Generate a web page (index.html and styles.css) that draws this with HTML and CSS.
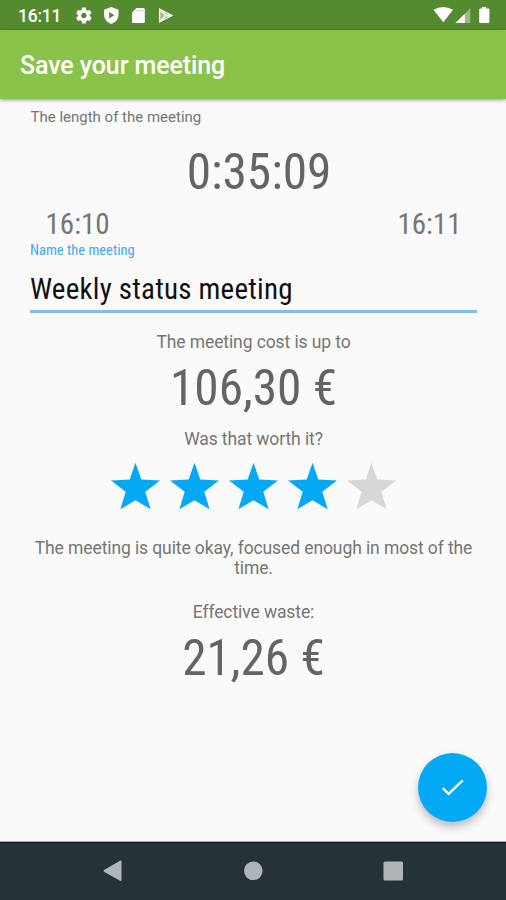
FILE: index.html
```html
<!DOCTYPE html>
<html lang="en">
<head>
<meta charset="utf-8">
<title>Save your meeting</title>
<link rel="stylesheet" href="styles.css">
</head>
<body>
<div class="screen">
  <div class="statusbar">
    <span class="clock">16:11</span>
    <svg class="status-left" width="100" height="30" viewBox="75 0 100 30" fill="#fff">
      <path transform="translate(74.4 6) scale(.79)" d="M19.43 12.98c.04-.32.07-.64.07-.98s-.03-.66-.07-.98l2.11-1.65c.19-.15.24-.42.12-.64l-2-3.46c-.12-.22-.39-.3-.61-.22l-2.49 1c-.52-.4-1.08-.73-1.69-.98l-.38-2.65C14.46 2.18 14.25 2 14 2h-4c-.25 0-.46.18-.49.42l-.38 2.65c-.61.25-1.17.59-1.69.98l-2.49-1c-.23-.09-.49 0-.61.22l-2 3.46c-.13.22-.07.49.12.64l2.11 1.65c-.04.32-.07.65-.07.98s.03.66.07.98l-2.11 1.65c-.19.15-.24.42-.12.64l2 3.460c.12.22.39.3.61.22l2.49-1c.52.4 1.08.73 1.69.98l.38 2.65c.03.24.24.42.49.42h4c.25 0 .46-.18.49-.42l.38-2.65c.61-.25 1.17-.59 1.69-.98l2.49 1c.23.09.49 0 .61-.22l2-3.46c.12-.22.07-.49-.12-.64l-2.11-1.65zM12 15.500c-1.930 0-3.500-1.570-3.500-3.500s1.570-3.500 3.500-3.500 3.500 1.570 3.500 3.500-1.570 3.500-3.500 3.500z"/>
      <path fill-rule="evenodd" d="M111.300 7l7.200 2.700v5.300c0 4.300-3.200 7.500-7.200 9-4-1.500-7.200-4.700-7.200-9V9.700zM109.100 12v6.600l5.400-3.300z"/>
      <path d="M136.500 8h7q1.300 0 1.300 1.300v12.400q0 1.300-1.300 1.300h-10.200q-1.300 0-1.300-1.300V12.500z"/>
      <path d="M136.600 10h1v1.300h-1zM139.200 10h1v1.300h-1zM141.800 10h1v1.300h-1z" fill="#558b2f" opacity=".6"/>
      <path d="M159 8.200L173.200 15.500 159 22.800z" opacity=".45"/>
      <path d="M159 8.200L173.200 15.500 159 22.800zM160.200 11v9l4.700-4.500zM162.700 11.300l3.700 3.600 1.800-.9zM162.700 19.700l3.700-3.600 1.800.9z" fill-rule="evenodd"/>
    </svg>
    <svg class="status-right" width="60" height="30" viewBox="430 0 60 30" fill="#fff">
      <path d="M433.500 9.800Q443.300 4.200 453 9.800L443.300 22.200z"/>
      <path d="M470.300 8.200v14.800h-14.800z" opacity=".42"/>
      <path d="M464.800 13.700V23h-9.300z"/>
      <path d="M482.200 7h4v1.500h2.200q1 0 1 1V22q0 1-1 1h-8.200q-1 0-1-1V9.500q0-1 1-1h2z"/>
    </svg>
  </div>
  <header class="appbar"><h1>Save your meeting</h1></header>
  <main class="content">
    <p class="caption">The length of the meeting</p>
    <p class="figure duration">0:35:09</p>
    <div class="times"><span>16:10</span><span>16:11</span></div>
    <div class="field">
      <label class="label">Name the meeting</label>
      <div class="value">Weekly status meeting</div>
    </div>
    <p class="note cost-note">The meeting cost is up to</p>
    <p class="figure cost">106,30 €</p>
    <p class="note worth">Was that worth it?</p>
    <div class="stars">
      <svg viewBox="0 0 20 19"><path d="M10 0l2.360 6.880L20 7.240l-6 4.560L16.180 19 10 15.270 3.820 19 6 11.800 0 7.240l7.640-.36z"/></svg>
      <svg viewBox="0 0 20 19"><path d="M10 0l2.360 6.880L20 7.240l-6 4.560L16.180 19 10 15.270 3.820 19 6 11.800 0 7.240l7.640-.36z"/></svg>
      <svg viewBox="0 0 20 19"><path d="M10 0l2.360 6.880L20 7.240l-6 4.560L16.180 19 10 15.270 3.820 19 6 11.800 0 7.240l7.640-.36z"/></svg>
      <svg viewBox="0 0 20 19"><path d="M10 0l2.360 6.880L20 7.240l-6 4.560L16.180 19 10 15.270 3.820 19 6 11.800 0 7.240l7.640-.36z"/></svg>
      <svg class="off" viewBox="0 0 20 19"><path d="M10 0l2.360 6.880L20 7.240l-6 4.560L16.180 19 10 15.270 3.820 19 6 11.800 0 7.240l7.640-.36z"/></svg>
    </div>
    <p class="note verdict">The meeting is quite okay, focused enough in most of the time.</p>
    <p class="note waste-note">Effective waste:</p>
    <p class="figure waste">21,26 €</p>
  </main>
  <button class="fab" aria-label="Save">
    <svg width="24" height="20" viewBox="0 0 24 20" fill="none" stroke="#fff" stroke-width="2.400"><path d="M1.800 10.200l5.800 5.700L21.800 2.300"/></svg>
  </button>
  <nav class="navbar">
    <svg width="506" height="58" viewBox="0 842 506 58" fill="#b0b5b9">
      <path d="M120 860.800Q121.500 860 121.500 861.800V879.700Q121.500 881.500 120 880.700L104 871.700Q103 870.800 104 870z"/>
      <circle cx="253.300" cy="870.800" r="9.300"/>
      <rect x="383.500" y="861.500" width="19.500" height="19" rx="1.500"/>
    </svg>
  </nav>
</div>
</body>
</html>
```
FILE: styles.css
```css
* { box-sizing: border-box; }
body { margin: 0; font-family: Roboto, sans-serif; background: #fafafa; }
p, h1 { margin: 0; }
svg { display: block; }
.screen { position: relative; width: 506px; height: 900px; display: flex; flex-direction: column; overflow: hidden; }
.statusbar { height: 30px; flex: none; display: flex; background: #558b2f; color: #fff; }
.clock { width: 75px; padding-left: 18px; font-size: 17.5px; letter-spacing: -.25px; font-weight: 500; line-height: 32px; }
.status-right { margin-left: auto; margin-right: 16px; }
.appbar { height: 69px; flex: none; padding-left: 20px; background: #8bc34a; box-shadow: 0 1px 4px rgba(0,0,0,.4); position: relative; }
.appbar h1 { font-size: 25px; letter-spacing: -.1px; font-weight: 500; line-height: 72px; color: #fff; white-space: nowrap; }
.content { flex: 1; padding: 8px 29px 0 30px; color: #757575; }
.caption { font-size: 15px; line-height: 21px; padding-left: .5px; }
.figure { font-family: "Roboto Condensed", Roboto, sans-serif; font-stretch: 75%; font-size: 49.3px; line-height: 60px; text-align: center; color: #646464; white-space: nowrap; }
.duration { margin-top: 14px; padding-left: 11px; }
.times { display: flex; justify-content: space-between; margin-top: 7px; padding: 0 15.5px 0 15.5px; font-family: "Roboto Condensed", Roboto, sans-serif; font-stretch: 75%; font-size: 29px; line-height: 30px; }
.field { height: 74px; border-bottom: 3px solid #84bcf2; font-family: "Roboto Condensed", Roboto, sans-serif; font-stretch: 75%; }
.label { display: block; padding-top: 2px; font-size: 14.5px; line-height: 20px; color: #3fa9f5; }
.value { margin-top: 8px; font-size: 29px; letter-spacing: .22px; line-height: 40px; color: #111; }
.note { font-size: 17.5px; letter-spacing: -.1px; line-height: 20px; text-align: center; }
.cost-note { margin-top: 19px; }
.cost { margin-top: 6px; }
.worth { margin-top: 11px; }
.stars { display: flex; justify-content: center; gap: 10.200px; margin-top: 13px; fill: #03a9f4; }
.stars svg { width: 49px; height: 48px; }
.stars .off { fill: #d7d7d7; }
.verdict { margin-top: 28px; }
.waste-note { margin-top: 24px; }
.waste { margin-top: 6px; }
.fab { position: absolute; left: 418px; top: 753px; width: 69px; height: 69px; padding: 0; border: 0; border-radius: 50%; background: #03a9f4; display: grid; place-items: center; box-shadow: 0 5px 8px rgba(0,0,0,.25); }
.navbar { height: 58px; flex: none; background: #263238; box-shadow: inset 0 1px #0b1524, 0 -1px #aaaeb4; }
```
